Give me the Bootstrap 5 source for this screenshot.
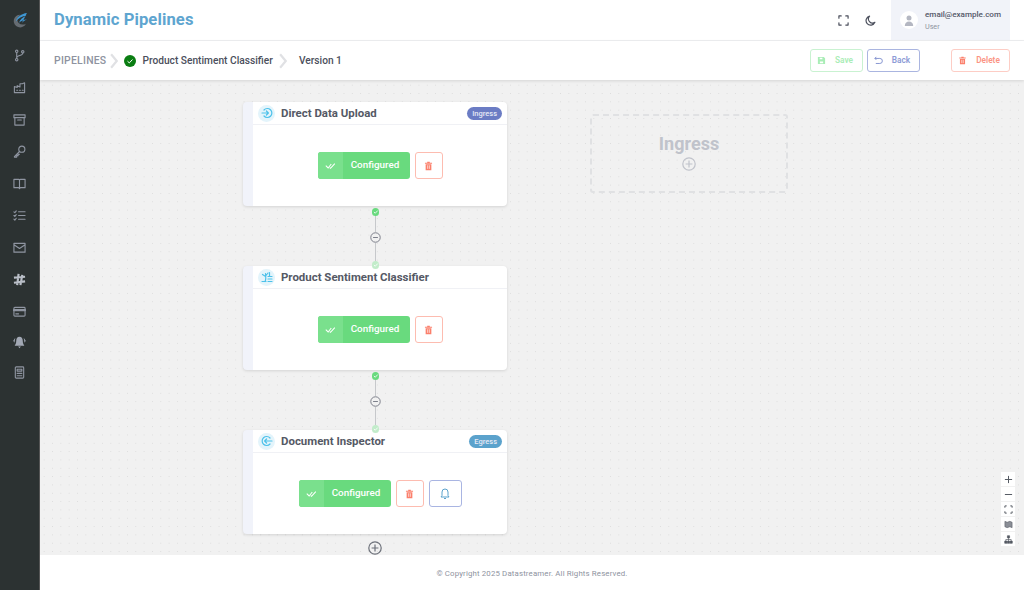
<!DOCTYPE html>
<html lang="en">
<head>
  <meta charset="UTF-8">
  <title>Dynamic Pipelines</title>
  <meta name="viewport" content="width=device-width, initial-scale=1">
  <link href="https://cdn.jsdelivr.net/npm/bootstrap@5.3.2/dist/css/bootstrap.min.css" rel="stylesheet">
  <style>
    html, body { height: 100%; overflow: hidden; }
    body { font-family: Roboto, "Liberation Sans", sans-serif; color: #4b4f5c; background: #fff; }
    .side-rail { width: 40px; background: #2c3232; border-right: 1px solid #555; }
    .side-rail svg { display: block; width: 13px; height: 13px; fill: none; stroke: #8f95a1; stroke-width: 1.2; stroke-linecap: round; stroke-linejoin: round; }
    .side-logo { height: 40px; }
    .side-rail .side-logo svg { width: 17px; height: 17px; stroke: none; }
    .side-item { height: 31.9px; }
    .side-tight { height: 30px; }
    .top-bar { height: 41px; border-bottom: 1px solid #eff0f2; }
    .app-title { font-size: 16.6px; font-weight: 700; color: #5ea5d0; margin-left: 14px; letter-spacing: .1px; padding-top: 1px; }
    .user-box { width: 119px; height: 40px; background: #f1f3f9; margin-left: 15px; padding-left: 9px; }
    .user-wrap { margin-right: 14px; }
    .user-avatar { width: 18px; height: 18px; background: #fff; border-radius: 50%; margin-right: 7px; }
    .user-mail { font-size: 8.1px; font-weight: 500; color: #55596a; line-height: 11px; }
    .user-role { font-size: 7.2px; color: #8e93a0; line-height: 11px; margin-top: 1px; }
    .top-ico { width: 11px; height: 11px; fill: none; stroke: #4b4f5c; stroke-width: 1.3; stroke-linecap: round; stroke-linejoin: round; }
    .crumb-bar { height: 39px; box-shadow: 0 1px 3px rgba(0,0,0,.12); position: relative; z-index: 2; background: #fff; padding-left: 14px; }
    .crumb-first { font-size: 10.4px; font-weight: 500; color: #8e93a0; letter-spacing: .25px; }
    .crumb-text { font-size: 10.2px; font-weight: 500; color: #4b4f5c; }
    .crumb-sep { width: 9px; height: 16px; fill: none; stroke: #e0e1e4; stroke-width: 2; }
    .crumb-check { margin-left: 5px; margin-right: 6px; }
    .crumb-gap { margin-left: 6px; margin-right: 11px; }
    .act-btn { height: 23px; font-size: 8.3px; font-weight: 600; border-radius: 3px; background: #fff; border: 1px solid; display: flex; align-items: center; padding: 0 0 0 6px; }
    .act-btn svg { width: 9px; height: 9px; }
    .act-btn span { flex-grow: 1; text-align: center; }
    .act-save { width: 53px; color: #a9edb6; border-color: #c9f2d1; }
    .act-back { width: 53px; color: #8d9bd6; border-color: #aab5e0; margin-left: 4px; }
    .act-del { width: 59px; color: #fb9484; border-color: #fdcdc5; margin-left: 31px; margin-right: 14px; }
    .flow-canvas { position: relative; background-color: #f1f1f1; background-image: radial-gradient(circle, #dcdcdc .6px, transparent .8px); background-size: 8.33px 8.33px; background-position: 0 1px; overflow: hidden; }
    .flow-node { position: absolute; left: 203px; width: 264px; height: 104px; background: #fff; border-left: 10px solid #f1f3fa; border-radius: 4px; box-shadow: 0 1px 3px rgba(0,0,0,.12); }
    .node-head { height: 23px; border-bottom: 1px solid #f0f1f5; padding-left: 5px; padding-right: 5px; }
    .node-ico { width: 17px; height: 17px; border-radius: 50%; background: #e3f4fb; margin-right: 6px; }
    .node-ico svg { width: 12px; height: 12px; fill: none; stroke: #4cc1ea; stroke-width: 1.2; stroke-linecap: round; stroke-linejoin: round; }
    .node-name { font-size: 11.45px; font-weight: 700; color: #555965; padding-top: 1px; }
    .node-tag { font-size: 7.5px; font-weight: 500; color: #e6e9f5; border-radius: 7px; height: 13px; line-height: 13px; padding: 0 5px; }
    .tag-in { background: #6b7cc4; }
    .tag-out { background: #5ba2cc; }
    .node-body { height: 81px; }
    .conf-btn { width: 92px; height: 27px; background: #69da7e; border-radius: 3px; color: #fff; font-size: 9.9px; font-weight: 500; overflow: hidden; }
    .conf-mark { width: 25px; height: 100%; background: #7ae08d; }
    .conf-mark svg { width: 11px; height: 8px; }
    .conf-label { flex: 1; text-align: center; padding-right: 2px; }
    .ghost-btn { width: 28px; height: 27px; background: #fff; border: 1px solid #fdbcb0; border-radius: 3px; margin-left: 5px; }
    .ghost-btn svg { width: 9px; height: 10px; }
    .bell-btn { width: 33px; border-color: #a9b5e2; margin-left: 5px; }
    .bell-btn svg { width: 10px; height: 12px; }
    .link-line { position: absolute; left: 334.5px; width: 1.5px; background: #c6c8cb; }
    .link-dot { position: absolute; left: 331.5px; width: 7.5px; height: 7.5px; border-radius: 50%; background: #69da7e; z-index: 1; }
    .link-dot svg { display: block; width: 7.5px; height: 7.5px; }
    .dot-pale { background: #c2ecca; }
    .link-minus { position: absolute; left: 329.5px; width: 11px; height: 11px; }
    .link-plus { position: absolute; left: 328px; top: 461px; width: 14px; height: 14px; color: #6d717a; }
    .ingress-box { position: absolute; left: 550px; top: 34px; width: 198px; height: 79px; border: 2px dashed #e0e1e3; border-radius: 3px; color: #c0c3cb; }
    .ingress-title { font-size: 18px; font-weight: 700; line-height: 22px; margin-top: 17px; }
    .ingress-box svg { width: 14px; height: 14px; display: block; margin-top: 2px; }
    .zoom-bar { position: absolute; right: 9px; top: 392px; width: 14px; background: #fff; }
    .zoom-bar div { height: 15px; border-bottom: 1px solid #f1f1f1; }
    .zoom-bar svg { width: 9px; height: 9px; fill: none; stroke: #555a63; stroke-width: 1.1; }
    .page-foot { height: 35px; font-size: 7.85px; color: #8e93a0; letter-spacing: .15px; background: #fff; padding-top: 2px; }
  </style>
</head>
<body>
<svg width="0" height="0" class="position-absolute">
  <symbol id="trash" viewBox="0 0 12 14"><path d="M1 2.5h10v1.2H1zM4.2 1h3.6v1.5H4.2zM2 4.5h8V13H2z" fill="#fb7f6b"/><path d="M4.8 6v5M7.2 6v5" stroke="#fff" stroke-width=".9"/></symbol>
  <symbol id="checks" viewBox="0 0 14 10"><path d="M1 4.5l3 3 4-5M6 7l1 1 5.5-6" fill="none" stroke="#fff" stroke-width="1.3"/></symbol>
  <symbol id="tick" viewBox="0 0 10 10"><path d="M2.5 5.2l1.8 1.8 3.4-3.6" fill="none" stroke="#fff" stroke-width="1.1"/></symbol>
  <symbol id="circplus" viewBox="0 0 14 14"><circle cx="7" cy="7" r="6.2" fill="none" stroke="currentColor" stroke-width="1.2"/><path d="M7 3.6v6.8M3.6 7h6.8" stroke="currentColor" stroke-width="1.2"/></symbol>
  <symbol id="circminus" viewBox="0 0 10 10"><circle cx="5" cy="5" r="4.3" fill="#f1f1f1" stroke="#7c808b" stroke-width=".9"/><path d="M2.8 5h4.4" stroke="#7c808b" stroke-width=".9"/></symbol>
  <symbol id="circarrow" viewBox="0 0 12 12"><path d="M3 3a4.5 4.5 0 1 1 0 6M1 6h6.400M5.400 4l2 2-2 2"/></symbol>
</svg>

<div class="d-flex vh-100">
  <nav class="side-rail flex-shrink-0 d-flex flex-column align-items-center">
    <div class="side-logo d-flex align-items-center justify-content-center">
      <svg viewBox="0 0 16 16"><path d="M9 2.5a6 6 0 1 0 5 8.500 6 6 0 0 1-7-1 5 5 0 0 1 2-7.500z" fill="#666c72"/><path d="M15 1C10 1.500 5.500 4.500 4.500 9 7 5.500 10.500 4 14.500 3.500 11 5 8.500 7 7.500 10c2-1.800 4.500-3 7.500-3-2.500 1-4 2-5 3.800" fill="#3f97d3"/></svg>
    </div>
    <div class="side-item d-flex align-items-center justify-content-center"><svg viewBox="0 0 14 14"><circle cx="4" cy="2.5" r="1.3"/><circle cx="4" cy="11.5" r="1.3"/><circle cx="10.5" cy="3" r="1.3"/><path d="M4 4v6M10.500 4.500c0 3-6.500 2-6.500 5"/></svg></div>
    <div class="side-item d-flex align-items-center justify-content-center"><svg viewBox="0 0 14 14"><path d="M1.500 12.500V6l3 1V5l3 1.500V3h2.500l2.500-1v10.500zM4 10h1M7 10h1M10 10h1"/></svg></div>
    <div class="side-item d-flex align-items-center justify-content-center"><svg viewBox="0 0 14 14"><path d="M1 2h12v3H1zM2 5v8h10V5M5 7.500h4"/></svg></div>
    <div class="side-item d-flex align-items-center justify-content-center"><svg viewBox="0 0 14 14"><circle cx="9.5" cy="4.5" r="3.3"/><path d="M7 7L1.500 12.500V13H4v-1.500h1.500V10H7"/></svg></div>
    <div class="side-item d-flex align-items-center justify-content-center"><svg viewBox="0 0 14 14"><path d="M1 2.500h5c.6 0 1 .4 1 1 0-.6.4-1 1-1h5v9H8l-1 1-1-1H1zM7 3.500v8"/></svg></div>
    <div class="side-item d-flex align-items-center justify-content-center"><svg viewBox="0 0 14 14"><path d="M6 3h7M6 7h7M6 11h7M1 3l1 1 1.500-2M1 7l1 1 1.500-2M1 11l1 1 1.500-2"/></svg></div>
    <div class="side-item d-flex align-items-center justify-content-center"><svg viewBox="0 0 14 14"><path d="M1 2.500h12v9.500H1zM1 4l6 4 6-4"/></svg></div>
    <div class="side-item d-flex align-items-center justify-content-center"><svg viewBox="0 0 14 14" style="stroke:#b9bec7;stroke-width:2.3;stroke-linecap:butt"><path d="M6 1L4.500 13M10 2L8 13M1 5l12-1M1 10.500l12-1.500"/></svg></div>
    <div class="side-item d-flex align-items-center justify-content-center"><svg viewBox="0 0 14 14"><rect x="1" y="2.5" width="12" height="9.5" rx="1"/><path d="M1 5.500h12" stroke-width="2.4"/><path d="M3 9.500h3"/></svg></div>
    <div class="side-tight d-flex align-items-center justify-content-center"><svg viewBox="0 0 14 14" style="stroke:none"><path d="M7 .8C4.500.8 3.500 3 3.500 5.200 3.500 8 2.600 9.200 1.800 10.400h10.400C11.400 9.200 10.500 8 10.500 5.200 10.500 3 9.500.8 7 .8zM5.500 11.200h3L7 13.200zM2.500 2L.3 5.200l1.200 2zM11.500 2l2.200 3.200-1.200 2z" fill="#a2a8b4"/></svg></div>
    <div class="side-tight d-flex align-items-center justify-content-center"><svg viewBox="0 0 14 14"><rect x="2.5" y="1" width="9" height="12" rx="1"/><path d="M4.500 3.500h5v2h-5zM4.500 8h5M4.500 10.500h5"/></svg></div>
  </nav>

  <div class="flex-grow-1 d-flex flex-column" style="min-width:0">
    <header class="top-bar d-flex align-items-center">
      <div class="app-title flex-grow-1">Dynamic Pipelines</div>
      <svg class="top-ico me-3" viewBox="0 0 12 12"><path d="M1 3.500V1h2.500M8.500 1H11v2.500M11 8.500V11H8.500M3.500 11H1V8.500"/></svg>
      <svg class="top-ico" viewBox="0 0 12 12"><path d="M5 1.200A5 5 0 1 0 10.800 8 4.500 4.500 0 0 1 5 1.200z"/></svg>
      <div class="user-wrap">
        <div class="user-box d-flex align-items-center">
          <div class="user-avatar d-flex align-items-center justify-content-center">
            <svg width="10" height="11" viewBox="0 0 10 11"><circle cx="5" cy="3" r="2.5" fill="#b4b7c2"/><path d="M.8 11c0-3 1.800-4.500 4.200-4.500S9.200 8 9.200 11z" fill="#b4b7c2"/></svg>
          </div>
          <div>
            <div class="user-mail">email@example.com</div>
            <div class="user-role">User</div>
          </div>
        </div>
      </div>
    </header>

    <div class="crumb-bar d-flex align-items-center">
      <span class="crumb-first">PIPELINES</span>
      <svg class="crumb-sep ms-1" viewBox="0 0 8 14"><path d="M1 1l5 6-5 6"/></svg>
      <svg class="crumb-check" width="12" height="12" viewBox="0 0 12 12"><circle cx="6" cy="6" r="6" fill="#0a7d12"/><path d="M3.500 6.200l1.800 1.700 3.200-3.400" fill="none" stroke="#fff" stroke-width="1"/></svg>
      <span class="crumb-text">Product Sentiment Classifier</span>
      <svg class="crumb-sep crumb-gap" viewBox="0 0 8 14"><path d="M1 1l5 6-5 6"/></svg>
      <span class="crumb-text">Version 1</span>
      <div class="ms-auto d-flex">
        <button class="act-btn act-save" type="button">
          <svg viewBox="0 0 10 10"><path d="M1 1h6.500L9 2.500V9H1z" fill="#a9edb6"/><path d="M3 2h3v1.500H3zM3.200 6h3.600v2H3.200z" fill="#fff"/></svg>
          <span>Save</span>
        </button>
        <button class="act-btn act-back" type="button">
          <svg viewBox="0 0 10 10" fill="none" stroke="#7c8ccd" stroke-width="1"><path d="M2.500 1L1 2.700l1.500 1.600M1 2.700h5.500a2.700 2.700 0 0 1 0 5.600H2"/></svg>
          <span>Back</span>
        </button>
        <button class="act-btn act-del" type="button">
          <svg viewBox="0 0 12 14"><use href="#trash"/></svg>
          <span>Delete</span>
        </button>
      </div>
    </div>

    <main class="flow-canvas flex-grow-1">
      <div class="flow-node" style="top:22px">
        <div class="node-head d-flex align-items-center">
          <span class="node-ico d-flex align-items-center justify-content-center"><svg viewBox="0 0 12 12"><use href="#circarrow"/></svg></span>
          <span class="node-name flex-grow-1">Direct Data Upload</span>
          <span class="node-tag tag-in">Ingress</span>
        </div>
        <div class="node-body d-flex align-items-center justify-content-center">
          <div class="conf-btn d-flex align-items-center"><span class="conf-mark d-flex align-items-center justify-content-center"><svg viewBox="0 0 14 10"><use href="#checks"/></svg></span><span class="conf-label">Configured</span></div>
          <div class="ghost-btn d-flex align-items-center justify-content-center"><svg viewBox="0 0 12 14"><use href="#trash"/></svg></div>
        </div>
      </div>

      <div class="link-dot" style="top:128px"><svg viewBox="0 0 10 10"><use href="#tick"/></svg></div>
      <div class="link-line" style="top:134px;height:18px"></div>
      <svg class="link-minus" style="top:152px" viewBox="0 0 10 10"><use href="#circminus"/></svg>
      <div class="link-line" style="top:163px;height:18px"></div>
      <div class="link-dot dot-pale" style="top:181px"><svg viewBox="0 0 10 10"><use href="#tick"/></svg></div>

      <div class="flow-node" style="top:186px">
        <div class="node-head d-flex align-items-center">
          <span class="node-ico d-flex align-items-center justify-content-center"><svg viewBox="0 0 12 12"><path d="M4 10.500c1-1.500 1-4 .5-8M4.600 5.500L1.500 3.500M4.600 5L7 2M1 10.500h4M7 5.500h4M7 8h4M7 10.500h4M8.500 1.500V5"/></svg></span>
          <span class="node-name flex-grow-1">Product Sentiment Classifier</span>
        </div>
        <div class="node-body d-flex align-items-center justify-content-center">
          <div class="conf-btn d-flex align-items-center"><span class="conf-mark d-flex align-items-center justify-content-center"><svg viewBox="0 0 14 10"><use href="#checks"/></svg></span><span class="conf-label">Configured</span></div>
          <div class="ghost-btn d-flex align-items-center justify-content-center"><svg viewBox="0 0 12 14"><use href="#trash"/></svg></div>
        </div>
      </div>

      <div class="link-dot" style="top:292px"><svg viewBox="0 0 10 10"><use href="#tick"/></svg></div>
      <div class="link-line" style="top:298px;height:18px"></div>
      <svg class="link-minus" style="top:316px" viewBox="0 0 10 10"><use href="#circminus"/></svg>
      <div class="link-line" style="top:327px;height:18px"></div>
      <div class="link-dot dot-pale" style="top:345px"><svg viewBox="0 0 10 10"><use href="#tick"/></svg></div>

      <div class="flow-node" style="top:350px">
        <div class="node-head d-flex align-items-center">
          <span class="node-ico d-flex align-items-center justify-content-center"><svg viewBox="0 0 12 12"><path d="M9 3a4.500 4.500 0 1 0 0 6M11 6H3.600M5.600 4l-2 2 2 2"/></svg></span>
          <span class="node-name flex-grow-1">Document Inspector</span>
          <span class="node-tag tag-out">Egress</span>
        </div>
        <div class="node-body d-flex align-items-center justify-content-center">
          <div class="conf-btn d-flex align-items-center"><span class="conf-mark d-flex align-items-center justify-content-center"><svg viewBox="0 0 14 10"><use href="#checks"/></svg></span><span class="conf-label">Configured</span></div>
          <div class="ghost-btn d-flex align-items-center justify-content-center"><svg viewBox="0 0 12 14"><use href="#trash"/></svg></div>
          <div class="ghost-btn bell-btn d-flex align-items-center justify-content-center"><svg viewBox="0 0 10 12" fill="none" stroke="#5ba2cc" stroke-width="1"><path d="M5 1a3 3 0 0 0-3 3v3.500L1 9h8L8 7.500V4a3 3 0 0 0-3-3zM4 10.500h2"/></svg></div>
        </div>
      </div>

      <svg class="link-plus" viewBox="0 0 14 14"><use href="#circplus"/></svg>

      <div class="ingress-box d-flex flex-column align-items-center">
        <div class="ingress-title">Ingress</div>
        <svg viewBox="0 0 14 14"><use href="#circplus"/></svg>
      </div>

      <div class="zoom-bar">
        <div class="d-flex align-items-center justify-content-center"><svg viewBox="0 0 10 10"><path d="M5 1v8M1 5h8"/></svg></div>
        <div class="d-flex align-items-center justify-content-center"><svg viewBox="0 0 10 10"><path d="M1 5h8"/></svg></div>
        <div class="d-flex align-items-center justify-content-center"><svg viewBox="0 0 10 10"><path d="M1 3V1h2M7 1h2v2M9 7v2H7M3 9H1V7"/></svg></div>
        <div class="d-flex align-items-center justify-content-center"><svg viewBox="0 0 10 10" style="stroke-width:.6"><path d="M1 1.500l2.500 1 3-1 2.500 1v6l-2.500-1-3 1-2.500-1z" fill="#8a8e96"/></svg></div>
        <div class="d-flex align-items-center justify-content-center"><svg viewBox="0 0 10 10" style="stroke-width:.7"><path d="M3.800.8h2.400v2.400H3.800zM.8 6.800h2.400v2.400H.8zM3.800 6.800h2.400v2.400H3.800zM6.800 6.800h2.400v2.400H6.800z" fill="#555a63"/><path d="M5 3.200v3.600M2 6.800V5h6v1.800"/></svg></div>
      </div>
    </main>

    <footer class="page-foot d-flex align-items-center justify-content-center">© Copyright 2025 Datastreamer. All Rights Reserved.</footer>
  </div>
</div>

<script src="https://cdn.jsdelivr.net/npm/bootstrap@5.3.2/dist/js/bootstrap.bundle.min.js"></script>
</body>
</html>
